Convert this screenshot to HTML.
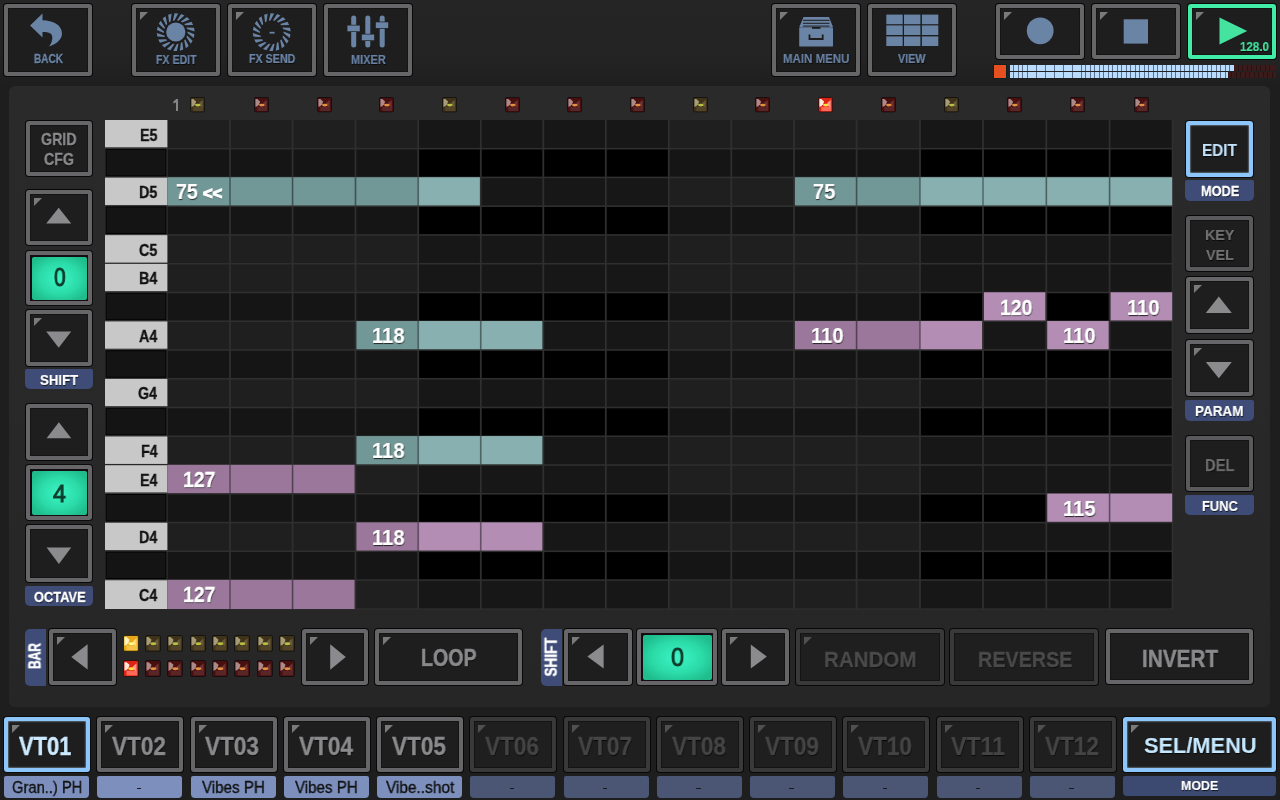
<!DOCTYPE html><html><head><meta charset="utf-8"><style>
*{margin:0;padding:0}
html,body{width:1280px;height:800px;overflow:hidden;background:#1e1e1e}
body{position:relative;font-family:"Liberation Sans",sans-serif}
.tx{position:absolute;white-space:nowrap;line-height:normal;transform-origin:0 0;will-change:transform}
.b{position:absolute;box-sizing:border-box;border:4px solid #666669;border-radius:3px;background:#1f1e1f;box-shadow:0 0 0 1px #080808, inset 0 0 0 1px #141414}
.b.mid{border-color:#5a5a5c}
.b.dim{border-color:#39393a;background:#1f1f1f}
.b.dim .cn{border-top-color:#505051}
.b.blue{border-color:#8cc6fa;box-shadow:0 0 0 1px #0c0c0c, inset 0 0 2px #bfe2ff}
.b.grn{border-color:#40eca6}
.cn{position:absolute;left:4px;top:4px;width:0;height:0;border-top:8px solid #7a7a7b;border-right:8px solid transparent}
.g{position:absolute;box-sizing:border-box;border:4px solid #666669;border-radius:3px;background:#140c10;box-shadow:0 0 0 1px #0c0c0c}
.g i{position:absolute;left:1.5px;top:1.5px;right:1.5px;bottom:1.5px;border-radius:2px;background:radial-gradient(ellipse 60% 60% at 50% 50%,#3cf5c6 0%,#2bdba8 60%,#1fbc8c 100%)}
.led{position:absolute;box-sizing:border-box;border-radius:2px}
.led.yd{background:#4d3f22;box-shadow:0 0 0 1px #1a140a}
.led.rd{background:#4a1818;box-shadow:0 0 0 1px #1a0a0a}
.led.rb{background:#e8281c;box-shadow:0 0 1px 1px #501010}
.led.yb{background:#f0b428;box-shadow:0 0 1px 1px #504010}
.lb{position:absolute;background:#3e4c77;border-radius:2px 2px 5px 5px}
.tl{position:absolute;background:#7d90bd;border-radius:2px 2px 4px 4px}
.tl.dim{background:#4b5675}
.tl.nav{background:#3c4a72}
</style></head><body><div style="position:absolute;left:0px;top:0px;width:1280px;height:90px;background:linear-gradient(180deg,#252525 0%,#232323 70%,#1d1d1d 100%)"></div>
<div style="position:absolute;left:9px;top:86px;width:1261px;height:620.5px;background:linear-gradient(180deg,#2a2a2a 0%,#282828 60%,#262626 100%);border-radius:6px"></div>
<svg style="position:absolute;left:0;top:0" width="1280" height="800" viewBox="0 0 1280 800"><rect x="167.6" y="120.0" width="1005.70" height="489.60" fill="#2f2f2f"/><rect x="167.40" y="120.00" width="61.70" height="27.86" fill="#1f1f1f"/><rect x="230.90" y="120.00" width="60.80" height="27.86" fill="#1f1f1f"/><rect x="293.50" y="120.00" width="61.10" height="27.86" fill="#1f1f1f"/><rect x="356.40" y="120.00" width="60.90" height="27.86" fill="#1f1f1f"/><rect x="419.10" y="120.00" width="60.80" height="27.86" fill="#171717"/><rect x="481.70" y="120.00" width="60.70" height="27.86" fill="#171717"/><rect x="544.20" y="120.00" width="60.70" height="27.86" fill="#171717"/><rect x="606.70" y="120.00" width="61.20" height="27.86" fill="#171717"/><rect x="669.70" y="120.00" width="60.70" height="27.86" fill="#1f1f1f"/><rect x="732.20" y="120.00" width="60.90" height="27.86" fill="#1f1f1f"/><rect x="794.90" y="120.00" width="60.80" height="27.86" fill="#1f1f1f"/><rect x="857.50" y="120.00" width="61.60" height="27.86" fill="#1f1f1f"/><rect x="920.90" y="120.00" width="61.20" height="27.86" fill="#171717"/><rect x="983.90" y="120.00" width="61.50" height="27.86" fill="#171717"/><rect x="1047.20" y="120.00" width="61.50" height="27.86" fill="#171717"/><rect x="1110.50" y="120.00" width="61.20" height="27.86" fill="#171717"/><rect x="167.40" y="149.46" width="61.70" height="27.16" fill="#151515"/><rect x="230.90" y="149.46" width="60.80" height="27.16" fill="#151515"/><rect x="293.50" y="149.46" width="61.10" height="27.16" fill="#151515"/><rect x="356.40" y="149.46" width="60.90" height="27.16" fill="#151515"/><rect x="419.10" y="149.46" width="60.80" height="27.16" fill="#000000"/><rect x="481.70" y="149.46" width="60.70" height="27.16" fill="#000000"/><rect x="544.20" y="149.46" width="60.70" height="27.16" fill="#000000"/><rect x="606.70" y="149.46" width="61.20" height="27.16" fill="#000000"/><rect x="669.70" y="149.46" width="60.70" height="27.16" fill="#151515"/><rect x="732.20" y="149.46" width="60.90" height="27.16" fill="#151515"/><rect x="794.90" y="149.46" width="60.80" height="27.16" fill="#151515"/><rect x="857.50" y="149.46" width="61.60" height="27.16" fill="#151515"/><rect x="920.90" y="149.46" width="61.20" height="27.16" fill="#000000"/><rect x="983.90" y="149.46" width="61.50" height="27.16" fill="#000000"/><rect x="1047.20" y="149.46" width="61.50" height="27.16" fill="#000000"/><rect x="1110.50" y="149.46" width="61.20" height="27.16" fill="#000000"/><rect x="167.40" y="178.22" width="61.70" height="27.16" fill="#1f1f1f"/><rect x="230.90" y="178.22" width="60.80" height="27.16" fill="#1f1f1f"/><rect x="293.50" y="178.22" width="61.10" height="27.16" fill="#1f1f1f"/><rect x="356.40" y="178.22" width="60.90" height="27.16" fill="#1f1f1f"/><rect x="419.10" y="178.22" width="60.80" height="27.16" fill="#171717"/><rect x="481.70" y="178.22" width="60.70" height="27.16" fill="#171717"/><rect x="544.20" y="178.22" width="60.70" height="27.16" fill="#171717"/><rect x="606.70" y="178.22" width="61.20" height="27.16" fill="#171717"/><rect x="669.70" y="178.22" width="60.70" height="27.16" fill="#1f1f1f"/><rect x="732.20" y="178.22" width="60.90" height="27.16" fill="#1f1f1f"/><rect x="794.90" y="178.22" width="60.80" height="27.16" fill="#1f1f1f"/><rect x="857.50" y="178.22" width="61.60" height="27.16" fill="#1f1f1f"/><rect x="920.90" y="178.22" width="61.20" height="27.16" fill="#171717"/><rect x="983.90" y="178.22" width="61.50" height="27.16" fill="#171717"/><rect x="1047.20" y="178.22" width="61.50" height="27.16" fill="#171717"/><rect x="1110.50" y="178.22" width="61.20" height="27.16" fill="#171717"/><rect x="167.40" y="206.98" width="61.70" height="27.16" fill="#151515"/><rect x="230.90" y="206.98" width="60.80" height="27.16" fill="#151515"/><rect x="293.50" y="206.98" width="61.10" height="27.16" fill="#151515"/><rect x="356.40" y="206.98" width="60.90" height="27.16" fill="#151515"/><rect x="419.10" y="206.98" width="60.80" height="27.16" fill="#000000"/><rect x="481.70" y="206.98" width="60.70" height="27.16" fill="#000000"/><rect x="544.20" y="206.98" width="60.70" height="27.16" fill="#000000"/><rect x="606.70" y="206.98" width="61.20" height="27.16" fill="#000000"/><rect x="669.70" y="206.98" width="60.70" height="27.16" fill="#151515"/><rect x="732.20" y="206.98" width="60.90" height="27.16" fill="#151515"/><rect x="794.90" y="206.98" width="60.80" height="27.16" fill="#151515"/><rect x="857.50" y="206.98" width="61.60" height="27.16" fill="#151515"/><rect x="920.90" y="206.98" width="61.20" height="27.16" fill="#000000"/><rect x="983.90" y="206.98" width="61.50" height="27.16" fill="#000000"/><rect x="1047.20" y="206.98" width="61.50" height="27.16" fill="#000000"/><rect x="1110.50" y="206.98" width="61.20" height="27.16" fill="#000000"/><rect x="167.40" y="235.74" width="61.70" height="27.16" fill="#1f1f1f"/><rect x="230.90" y="235.74" width="60.80" height="27.16" fill="#1f1f1f"/><rect x="293.50" y="235.74" width="61.10" height="27.16" fill="#1f1f1f"/><rect x="356.40" y="235.74" width="60.90" height="27.16" fill="#1f1f1f"/><rect x="419.10" y="235.74" width="60.80" height="27.16" fill="#171717"/><rect x="481.70" y="235.74" width="60.70" height="27.16" fill="#171717"/><rect x="544.20" y="235.74" width="60.70" height="27.16" fill="#171717"/><rect x="606.70" y="235.74" width="61.20" height="27.16" fill="#171717"/><rect x="669.70" y="235.74" width="60.70" height="27.16" fill="#1f1f1f"/><rect x="732.20" y="235.74" width="60.90" height="27.16" fill="#1f1f1f"/><rect x="794.90" y="235.74" width="60.80" height="27.16" fill="#1f1f1f"/><rect x="857.50" y="235.74" width="61.60" height="27.16" fill="#1f1f1f"/><rect x="920.90" y="235.74" width="61.20" height="27.16" fill="#171717"/><rect x="983.90" y="235.74" width="61.50" height="27.16" fill="#171717"/><rect x="1047.20" y="235.74" width="61.50" height="27.16" fill="#171717"/><rect x="1110.50" y="235.74" width="61.20" height="27.16" fill="#171717"/><rect x="167.40" y="264.50" width="61.70" height="27.16" fill="#1f1f1f"/><rect x="230.90" y="264.50" width="60.80" height="27.16" fill="#1f1f1f"/><rect x="293.50" y="264.50" width="61.10" height="27.16" fill="#1f1f1f"/><rect x="356.40" y="264.50" width="60.90" height="27.16" fill="#1f1f1f"/><rect x="419.10" y="264.50" width="60.80" height="27.16" fill="#171717"/><rect x="481.70" y="264.50" width="60.70" height="27.16" fill="#171717"/><rect x="544.20" y="264.50" width="60.70" height="27.16" fill="#171717"/><rect x="606.70" y="264.50" width="61.20" height="27.16" fill="#171717"/><rect x="669.70" y="264.50" width="60.70" height="27.16" fill="#1f1f1f"/><rect x="732.20" y="264.50" width="60.90" height="27.16" fill="#1f1f1f"/><rect x="794.90" y="264.50" width="60.80" height="27.16" fill="#1f1f1f"/><rect x="857.50" y="264.50" width="61.60" height="27.16" fill="#1f1f1f"/><rect x="920.90" y="264.50" width="61.20" height="27.16" fill="#171717"/><rect x="983.90" y="264.50" width="61.50" height="27.16" fill="#171717"/><rect x="1047.20" y="264.50" width="61.50" height="27.16" fill="#171717"/><rect x="1110.50" y="264.50" width="61.20" height="27.16" fill="#171717"/><rect x="167.40" y="293.26" width="61.70" height="27.16" fill="#151515"/><rect x="230.90" y="293.26" width="60.80" height="27.16" fill="#151515"/><rect x="293.50" y="293.26" width="61.10" height="27.16" fill="#151515"/><rect x="356.40" y="293.26" width="60.90" height="27.16" fill="#151515"/><rect x="419.10" y="293.26" width="60.80" height="27.16" fill="#000000"/><rect x="481.70" y="293.26" width="60.70" height="27.16" fill="#000000"/><rect x="544.20" y="293.26" width="60.70" height="27.16" fill="#000000"/><rect x="606.70" y="293.26" width="61.20" height="27.16" fill="#000000"/><rect x="669.70" y="293.26" width="60.70" height="27.16" fill="#151515"/><rect x="732.20" y="293.26" width="60.90" height="27.16" fill="#151515"/><rect x="794.90" y="293.26" width="60.80" height="27.16" fill="#151515"/><rect x="857.50" y="293.26" width="61.60" height="27.16" fill="#151515"/><rect x="920.90" y="293.26" width="61.20" height="27.16" fill="#000000"/><rect x="983.90" y="293.26" width="61.50" height="27.16" fill="#000000"/><rect x="1047.20" y="293.26" width="61.50" height="27.16" fill="#000000"/><rect x="1110.50" y="293.26" width="61.20" height="27.16" fill="#000000"/><rect x="167.40" y="322.02" width="61.70" height="27.16" fill="#1f1f1f"/><rect x="230.90" y="322.02" width="60.80" height="27.16" fill="#1f1f1f"/><rect x="293.50" y="322.02" width="61.10" height="27.16" fill="#1f1f1f"/><rect x="356.40" y="322.02" width="60.90" height="27.16" fill="#1f1f1f"/><rect x="419.10" y="322.02" width="60.80" height="27.16" fill="#171717"/><rect x="481.70" y="322.02" width="60.70" height="27.16" fill="#171717"/><rect x="544.20" y="322.02" width="60.70" height="27.16" fill="#171717"/><rect x="606.70" y="322.02" width="61.20" height="27.16" fill="#171717"/><rect x="669.70" y="322.02" width="60.70" height="27.16" fill="#1f1f1f"/><rect x="732.20" y="322.02" width="60.90" height="27.16" fill="#1f1f1f"/><rect x="794.90" y="322.02" width="60.80" height="27.16" fill="#1f1f1f"/><rect x="857.50" y="322.02" width="61.60" height="27.16" fill="#1f1f1f"/><rect x="920.90" y="322.02" width="61.20" height="27.16" fill="#171717"/><rect x="983.90" y="322.02" width="61.50" height="27.16" fill="#171717"/><rect x="1047.20" y="322.02" width="61.50" height="27.16" fill="#171717"/><rect x="1110.50" y="322.02" width="61.20" height="27.16" fill="#171717"/><rect x="167.40" y="350.78" width="61.70" height="27.16" fill="#151515"/><rect x="230.90" y="350.78" width="60.80" height="27.16" fill="#151515"/><rect x="293.50" y="350.78" width="61.10" height="27.16" fill="#151515"/><rect x="356.40" y="350.78" width="60.90" height="27.16" fill="#151515"/><rect x="419.10" y="350.78" width="60.80" height="27.16" fill="#000000"/><rect x="481.70" y="350.78" width="60.70" height="27.16" fill="#000000"/><rect x="544.20" y="350.78" width="60.70" height="27.16" fill="#000000"/><rect x="606.70" y="350.78" width="61.20" height="27.16" fill="#000000"/><rect x="669.70" y="350.78" width="60.70" height="27.16" fill="#151515"/><rect x="732.20" y="350.78" width="60.90" height="27.16" fill="#151515"/><rect x="794.90" y="350.78" width="60.80" height="27.16" fill="#151515"/><rect x="857.50" y="350.78" width="61.60" height="27.16" fill="#151515"/><rect x="920.90" y="350.78" width="61.20" height="27.16" fill="#000000"/><rect x="983.90" y="350.78" width="61.50" height="27.16" fill="#000000"/><rect x="1047.20" y="350.78" width="61.50" height="27.16" fill="#000000"/><rect x="1110.50" y="350.78" width="61.20" height="27.16" fill="#000000"/><rect x="167.40" y="379.54" width="61.70" height="27.16" fill="#1f1f1f"/><rect x="230.90" y="379.54" width="60.80" height="27.16" fill="#1f1f1f"/><rect x="293.50" y="379.54" width="61.10" height="27.16" fill="#1f1f1f"/><rect x="356.40" y="379.54" width="60.90" height="27.16" fill="#1f1f1f"/><rect x="419.10" y="379.54" width="60.80" height="27.16" fill="#171717"/><rect x="481.70" y="379.54" width="60.70" height="27.16" fill="#171717"/><rect x="544.20" y="379.54" width="60.70" height="27.16" fill="#171717"/><rect x="606.70" y="379.54" width="61.20" height="27.16" fill="#171717"/><rect x="669.70" y="379.54" width="60.70" height="27.16" fill="#1f1f1f"/><rect x="732.20" y="379.54" width="60.90" height="27.16" fill="#1f1f1f"/><rect x="794.90" y="379.54" width="60.80" height="27.16" fill="#1f1f1f"/><rect x="857.50" y="379.54" width="61.60" height="27.16" fill="#1f1f1f"/><rect x="920.90" y="379.54" width="61.20" height="27.16" fill="#171717"/><rect x="983.90" y="379.54" width="61.50" height="27.16" fill="#171717"/><rect x="1047.20" y="379.54" width="61.50" height="27.16" fill="#171717"/><rect x="1110.50" y="379.54" width="61.20" height="27.16" fill="#171717"/><rect x="167.40" y="408.30" width="61.70" height="27.16" fill="#151515"/><rect x="230.90" y="408.30" width="60.80" height="27.16" fill="#151515"/><rect x="293.50" y="408.30" width="61.10" height="27.16" fill="#151515"/><rect x="356.40" y="408.30" width="60.90" height="27.16" fill="#151515"/><rect x="419.10" y="408.30" width="60.80" height="27.16" fill="#000000"/><rect x="481.70" y="408.30" width="60.70" height="27.16" fill="#000000"/><rect x="544.20" y="408.30" width="60.70" height="27.16" fill="#000000"/><rect x="606.70" y="408.30" width="61.20" height="27.16" fill="#000000"/><rect x="669.70" y="408.30" width="60.70" height="27.16" fill="#151515"/><rect x="732.20" y="408.30" width="60.90" height="27.16" fill="#151515"/><rect x="794.90" y="408.30" width="60.80" height="27.16" fill="#151515"/><rect x="857.50" y="408.30" width="61.60" height="27.16" fill="#151515"/><rect x="920.90" y="408.30" width="61.20" height="27.16" fill="#000000"/><rect x="983.90" y="408.30" width="61.50" height="27.16" fill="#000000"/><rect x="1047.20" y="408.30" width="61.50" height="27.16" fill="#000000"/><rect x="1110.50" y="408.30" width="61.20" height="27.16" fill="#000000"/><rect x="167.40" y="437.06" width="61.70" height="27.16" fill="#1f1f1f"/><rect x="230.90" y="437.06" width="60.80" height="27.16" fill="#1f1f1f"/><rect x="293.50" y="437.06" width="61.10" height="27.16" fill="#1f1f1f"/><rect x="356.40" y="437.06" width="60.90" height="27.16" fill="#1f1f1f"/><rect x="419.10" y="437.06" width="60.80" height="27.16" fill="#171717"/><rect x="481.70" y="437.06" width="60.70" height="27.16" fill="#171717"/><rect x="544.20" y="437.06" width="60.70" height="27.16" fill="#171717"/><rect x="606.70" y="437.06" width="61.20" height="27.16" fill="#171717"/><rect x="669.70" y="437.06" width="60.70" height="27.16" fill="#1f1f1f"/><rect x="732.20" y="437.06" width="60.90" height="27.16" fill="#1f1f1f"/><rect x="794.90" y="437.06" width="60.80" height="27.16" fill="#1f1f1f"/><rect x="857.50" y="437.06" width="61.60" height="27.16" fill="#1f1f1f"/><rect x="920.90" y="437.06" width="61.20" height="27.16" fill="#171717"/><rect x="983.90" y="437.06" width="61.50" height="27.16" fill="#171717"/><rect x="1047.20" y="437.06" width="61.50" height="27.16" fill="#171717"/><rect x="1110.50" y="437.06" width="61.20" height="27.16" fill="#171717"/><rect x="167.40" y="465.82" width="61.70" height="27.16" fill="#1f1f1f"/><rect x="230.90" y="465.82" width="60.80" height="27.16" fill="#1f1f1f"/><rect x="293.50" y="465.82" width="61.10" height="27.16" fill="#1f1f1f"/><rect x="356.40" y="465.82" width="60.90" height="27.16" fill="#1f1f1f"/><rect x="419.10" y="465.82" width="60.80" height="27.16" fill="#171717"/><rect x="481.70" y="465.82" width="60.70" height="27.16" fill="#171717"/><rect x="544.20" y="465.82" width="60.70" height="27.16" fill="#171717"/><rect x="606.70" y="465.82" width="61.20" height="27.16" fill="#171717"/><rect x="669.70" y="465.82" width="60.70" height="27.16" fill="#1f1f1f"/><rect x="732.20" y="465.82" width="60.90" height="27.16" fill="#1f1f1f"/><rect x="794.90" y="465.82" width="60.80" height="27.16" fill="#1f1f1f"/><rect x="857.50" y="465.82" width="61.60" height="27.16" fill="#1f1f1f"/><rect x="920.90" y="465.82" width="61.20" height="27.16" fill="#171717"/><rect x="983.90" y="465.82" width="61.50" height="27.16" fill="#171717"/><rect x="1047.20" y="465.82" width="61.50" height="27.16" fill="#171717"/><rect x="1110.50" y="465.82" width="61.20" height="27.16" fill="#171717"/><rect x="167.40" y="494.58" width="61.70" height="27.16" fill="#151515"/><rect x="230.90" y="494.58" width="60.80" height="27.16" fill="#151515"/><rect x="293.50" y="494.58" width="61.10" height="27.16" fill="#151515"/><rect x="356.40" y="494.58" width="60.90" height="27.16" fill="#151515"/><rect x="419.10" y="494.58" width="60.80" height="27.16" fill="#000000"/><rect x="481.70" y="494.58" width="60.70" height="27.16" fill="#000000"/><rect x="544.20" y="494.58" width="60.70" height="27.16" fill="#000000"/><rect x="606.70" y="494.58" width="61.20" height="27.16" fill="#000000"/><rect x="669.70" y="494.58" width="60.70" height="27.16" fill="#151515"/><rect x="732.20" y="494.58" width="60.90" height="27.16" fill="#151515"/><rect x="794.90" y="494.58" width="60.80" height="27.16" fill="#151515"/><rect x="857.50" y="494.58" width="61.60" height="27.16" fill="#151515"/><rect x="920.90" y="494.58" width="61.20" height="27.16" fill="#000000"/><rect x="983.90" y="494.58" width="61.50" height="27.16" fill="#000000"/><rect x="1047.20" y="494.58" width="61.50" height="27.16" fill="#000000"/><rect x="1110.50" y="494.58" width="61.20" height="27.16" fill="#000000"/><rect x="167.40" y="523.34" width="61.70" height="27.16" fill="#1f1f1f"/><rect x="230.90" y="523.34" width="60.80" height="27.16" fill="#1f1f1f"/><rect x="293.50" y="523.34" width="61.10" height="27.16" fill="#1f1f1f"/><rect x="356.40" y="523.34" width="60.90" height="27.16" fill="#1f1f1f"/><rect x="419.10" y="523.34" width="60.80" height="27.16" fill="#171717"/><rect x="481.70" y="523.34" width="60.70" height="27.16" fill="#171717"/><rect x="544.20" y="523.34" width="60.70" height="27.16" fill="#171717"/><rect x="606.70" y="523.34" width="61.20" height="27.16" fill="#171717"/><rect x="669.70" y="523.34" width="60.70" height="27.16" fill="#1f1f1f"/><rect x="732.20" y="523.34" width="60.90" height="27.16" fill="#1f1f1f"/><rect x="794.90" y="523.34" width="60.80" height="27.16" fill="#1f1f1f"/><rect x="857.50" y="523.34" width="61.60" height="27.16" fill="#1f1f1f"/><rect x="920.90" y="523.34" width="61.20" height="27.16" fill="#171717"/><rect x="983.90" y="523.34" width="61.50" height="27.16" fill="#171717"/><rect x="1047.20" y="523.34" width="61.50" height="27.16" fill="#171717"/><rect x="1110.50" y="523.34" width="61.20" height="27.16" fill="#171717"/><rect x="167.40" y="552.10" width="61.70" height="27.16" fill="#151515"/><rect x="230.90" y="552.10" width="60.80" height="27.16" fill="#151515"/><rect x="293.50" y="552.10" width="61.10" height="27.16" fill="#151515"/><rect x="356.40" y="552.10" width="60.90" height="27.16" fill="#151515"/><rect x="419.10" y="552.10" width="60.80" height="27.16" fill="#000000"/><rect x="481.70" y="552.10" width="60.70" height="27.16" fill="#000000"/><rect x="544.20" y="552.10" width="60.70" height="27.16" fill="#000000"/><rect x="606.70" y="552.10" width="61.20" height="27.16" fill="#000000"/><rect x="669.70" y="552.10" width="60.70" height="27.16" fill="#151515"/><rect x="732.20" y="552.10" width="60.90" height="27.16" fill="#151515"/><rect x="794.90" y="552.10" width="60.80" height="27.16" fill="#151515"/><rect x="857.50" y="552.10" width="61.60" height="27.16" fill="#151515"/><rect x="920.90" y="552.10" width="61.20" height="27.16" fill="#000000"/><rect x="983.90" y="552.10" width="61.50" height="27.16" fill="#000000"/><rect x="1047.20" y="552.10" width="61.50" height="27.16" fill="#000000"/><rect x="1110.50" y="552.10" width="61.20" height="27.16" fill="#000000"/><rect x="167.40" y="580.86" width="61.70" height="27.54" fill="#1f1f1f"/><rect x="230.90" y="580.86" width="60.80" height="27.54" fill="#1f1f1f"/><rect x="293.50" y="580.86" width="61.10" height="27.54" fill="#1f1f1f"/><rect x="356.40" y="580.86" width="60.90" height="27.54" fill="#1f1f1f"/><rect x="419.10" y="580.86" width="60.80" height="27.54" fill="#171717"/><rect x="481.70" y="580.86" width="60.70" height="27.54" fill="#171717"/><rect x="544.20" y="580.86" width="60.70" height="27.54" fill="#171717"/><rect x="606.70" y="580.86" width="61.20" height="27.54" fill="#171717"/><rect x="669.70" y="580.86" width="60.70" height="27.54" fill="#1f1f1f"/><rect x="732.20" y="580.86" width="60.90" height="27.54" fill="#1f1f1f"/><rect x="794.90" y="580.86" width="60.80" height="27.54" fill="#1f1f1f"/><rect x="857.50" y="580.86" width="61.60" height="27.54" fill="#1f1f1f"/><rect x="920.90" y="580.86" width="61.20" height="27.54" fill="#171717"/><rect x="983.90" y="580.86" width="61.50" height="27.54" fill="#171717"/><rect x="1047.20" y="580.86" width="61.50" height="27.54" fill="#171717"/><rect x="1110.50" y="580.86" width="61.20" height="27.54" fill="#171717"/><rect x="105" y="120.00" width="62.4" height="27.56" fill="#c8c8c8"/><rect x="105" y="147.46" width="62.4" height="29.96" fill="#3a3a3a"/><rect x="106" y="149.36" width="60" height="26.56" fill="#141414" stroke="#000" stroke-width="1"/><rect x="105" y="177.62" width="62.4" height="27.46" fill="#c8c8c8"/><rect x="105" y="204.98" width="62.4" height="29.96" fill="#3a3a3a"/><rect x="106" y="206.88" width="60" height="26.56" fill="#141414" stroke="#000" stroke-width="1"/><rect x="105" y="235.14" width="62.4" height="27.46" fill="#c8c8c8"/><rect x="105" y="263.90" width="62.4" height="27.46" fill="#c8c8c8"/><rect x="105" y="291.26" width="62.4" height="29.96" fill="#3a3a3a"/><rect x="106" y="293.16" width="60" height="26.56" fill="#141414" stroke="#000" stroke-width="1"/><rect x="105" y="321.42" width="62.4" height="27.46" fill="#c8c8c8"/><rect x="105" y="348.78" width="62.4" height="29.96" fill="#3a3a3a"/><rect x="106" y="350.68" width="60" height="26.56" fill="#141414" stroke="#000" stroke-width="1"/><rect x="105" y="378.94" width="62.4" height="27.46" fill="#c8c8c8"/><rect x="105" y="406.30" width="62.4" height="29.96" fill="#3a3a3a"/><rect x="106" y="408.20" width="60" height="26.56" fill="#141414" stroke="#000" stroke-width="1"/><rect x="105" y="436.46" width="62.4" height="27.46" fill="#c8c8c8"/><rect x="105" y="465.22" width="62.4" height="27.46" fill="#c8c8c8"/><rect x="105" y="492.58" width="62.4" height="29.96" fill="#3a3a3a"/><rect x="106" y="494.48" width="60" height="26.56" fill="#141414" stroke="#000" stroke-width="1"/><rect x="105" y="522.74" width="62.4" height="27.46" fill="#c8c8c8"/><rect x="105" y="550.10" width="62.4" height="29.96" fill="#3a3a3a"/><rect x="106" y="552.00" width="60" height="26.56" fill="#141414" stroke="#000" stroke-width="1"/><rect x="105" y="580.26" width="62.4" height="28.74" fill="#c8c8c8"/><rect x="167.40" y="177.22" width="62.60" height="28.26" fill="#729797"/><rect x="230.00" y="177.22" width="62.60" height="28.26" fill="#729797"/><rect x="229.10" y="177.22" width="1.8" height="28.26" fill="#000" fill-opacity="0.35"/><rect x="292.60" y="177.22" width="62.90" height="28.26" fill="#729797"/><rect x="291.70" y="177.22" width="1.8" height="28.26" fill="#000" fill-opacity="0.35"/><rect x="355.50" y="177.22" width="62.70" height="28.26" fill="#729797"/><rect x="354.60" y="177.22" width="1.8" height="28.26" fill="#000" fill-opacity="0.35"/><rect x="418.20" y="177.22" width="61.70" height="28.26" fill="#89b0b0"/><rect x="417.30" y="177.22" width="1.8" height="28.26" fill="#000" fill-opacity="0.35"/><rect x="794.90" y="177.22" width="61.70" height="28.26" fill="#729797"/><rect x="856.60" y="177.22" width="63.40" height="28.26" fill="#729797"/><rect x="855.70" y="177.22" width="1.8" height="28.26" fill="#000" fill-opacity="0.35"/><rect x="920.00" y="177.22" width="63.00" height="28.26" fill="#89b0b0"/><rect x="919.10" y="177.22" width="1.8" height="28.26" fill="#000" fill-opacity="0.35"/><rect x="983.00" y="177.22" width="63.30" height="28.26" fill="#89b0b0"/><rect x="982.10" y="177.22" width="1.8" height="28.26" fill="#000" fill-opacity="0.35"/><rect x="1046.30" y="177.22" width="63.30" height="28.26" fill="#89b0b0"/><rect x="1045.40" y="177.22" width="1.8" height="28.26" fill="#000" fill-opacity="0.35"/><rect x="1109.60" y="177.22" width="62.60" height="28.26" fill="#89b0b0"/><rect x="1108.70" y="177.22" width="1.8" height="28.26" fill="#000" fill-opacity="0.35"/><rect x="983.90" y="292.26" width="61.50" height="28.26" fill="#b38db4"/><rect x="1110.50" y="292.26" width="61.70" height="28.26" fill="#b38db4"/><rect x="356.40" y="321.02" width="61.80" height="28.26" fill="#729797"/><rect x="418.20" y="321.02" width="62.60" height="28.26" fill="#89b0b0"/><rect x="417.30" y="321.02" width="1.8" height="28.26" fill="#000" fill-opacity="0.35"/><rect x="480.80" y="321.02" width="61.60" height="28.26" fill="#89b0b0"/><rect x="479.90" y="321.02" width="1.8" height="28.26" fill="#000" fill-opacity="0.35"/><rect x="794.90" y="321.02" width="61.70" height="28.26" fill="#9b789b"/><rect x="856.60" y="321.02" width="63.40" height="28.26" fill="#9b789b"/><rect x="855.70" y="321.02" width="1.8" height="28.26" fill="#000" fill-opacity="0.35"/><rect x="920.00" y="321.02" width="62.10" height="28.26" fill="#b38db4"/><rect x="919.10" y="321.02" width="1.8" height="28.26" fill="#000" fill-opacity="0.35"/><rect x="1047.20" y="321.02" width="61.50" height="28.26" fill="#b38db4"/><rect x="356.40" y="436.06" width="61.80" height="28.26" fill="#729797"/><rect x="418.20" y="436.06" width="62.60" height="28.26" fill="#89b0b0"/><rect x="417.30" y="436.06" width="1.8" height="28.26" fill="#000" fill-opacity="0.35"/><rect x="480.80" y="436.06" width="61.60" height="28.26" fill="#89b0b0"/><rect x="479.90" y="436.06" width="1.8" height="28.26" fill="#000" fill-opacity="0.35"/><rect x="167.40" y="464.82" width="62.60" height="28.26" fill="#9b789b"/><rect x="230.00" y="464.82" width="62.60" height="28.26" fill="#9b789b"/><rect x="229.10" y="464.82" width="1.8" height="28.26" fill="#000" fill-opacity="0.35"/><rect x="292.60" y="464.82" width="62.00" height="28.26" fill="#9b789b"/><rect x="291.70" y="464.82" width="1.8" height="28.26" fill="#000" fill-opacity="0.35"/><rect x="1047.20" y="493.58" width="62.40" height="28.26" fill="#b38db4"/><rect x="1109.60" y="493.58" width="62.60" height="28.26" fill="#b38db4"/><rect x="1108.70" y="493.58" width="1.8" height="28.26" fill="#000" fill-opacity="0.35"/><rect x="356.40" y="522.34" width="61.80" height="28.26" fill="#9b789b"/><rect x="418.20" y="522.34" width="62.60" height="28.26" fill="#b38db4"/><rect x="417.30" y="522.34" width="1.8" height="28.26" fill="#000" fill-opacity="0.35"/><rect x="480.80" y="522.34" width="61.60" height="28.26" fill="#b38db4"/><rect x="479.90" y="522.34" width="1.8" height="28.26" fill="#000" fill-opacity="0.35"/><rect x="167.40" y="579.86" width="62.60" height="29.14" fill="#9b789b"/><rect x="230.00" y="579.86" width="62.60" height="29.14" fill="#9b789b"/><rect x="229.10" y="579.86" width="1.8" height="29.14" fill="#000" fill-opacity="0.35"/><rect x="292.60" y="579.86" width="62.00" height="29.14" fill="#9b789b"/><rect x="291.70" y="579.86" width="1.8" height="29.14" fill="#000" fill-opacity="0.35"/></svg>
<div class="b" style="left:4px;top:4px;width:88px;height:72px"></div>
<div class="b" style="left:132px;top:4px;width:88px;height:72px"><i class="cn"></i></div>
<div class="b" style="left:228px;top:4px;width:88px;height:72px"><i class="cn"></i></div>
<div class="b" style="left:324px;top:4px;width:88px;height:72px"></div>
<div class="b" style="left:772px;top:4px;width:88px;height:72px"><i class="cn"></i></div>
<div class="b" style="left:868px;top:4px;width:88px;height:72px"></div>
<div class="b" style="left:996px;top:4px;width:88px;height:55px"><i class="cn"></i></div>
<div class="b" style="left:1092px;top:4px;width:88px;height:55px"><i class="cn"></i></div>
<div class="b grn" style="left:1188px;top:4px;width:88px;height:55px"><i class="cn"></i></div>
<div class="b" style="left:26px;top:121px;width:66px;height:55px"></div>
<div class="b" style="left:26px;top:190px;width:66px;height:55px"><i class="cn"></i></div>
<div class="g" style="left:26px;top:251px;width:66px;height:54px"><i></i></div>
<div class="b" style="left:26px;top:310px;width:66px;height:56px"><i class="cn"></i></div>
<div class="lb" style="left:25px;top:369px;width:68px;height:20px"></div>
<div class="b" style="left:26px;top:404px;width:66px;height:56px"></div>
<div class="g" style="left:26px;top:465px;width:66px;height:55px"><i></i></div>
<div class="b" style="left:26px;top:525px;width:66px;height:57px"></div>
<div class="lb" style="left:25px;top:586px;width:68px;height:20px"></div>
<div class="b blue" style="left:1186px;top:121px;width:67px;height:56px"></div>
<div class="lb" style="left:1185px;top:180px;width:69px;height:21px"></div>
<div class="b mid" style="left:1186px;top:216px;width:67px;height:55px"></div>
<div class="b" style="left:1186px;top:277px;width:67px;height:56px"><i class="cn"></i></div>
<div class="b" style="left:1186px;top:340px;width:67px;height:56px"><i class="cn"></i></div>
<div class="lb" style="left:1185px;top:400px;width:69px;height:21px"></div>
<div class="b mid" style="left:1186px;top:436px;width:67px;height:55px"></div>
<div class="lb" style="left:1185px;top:495px;width:69px;height:20px"></div>
<div class="lb" style="left:25px;top:629px;width:21px;height:57px;border-radius:5px 0 0 5px"></div>
<div class="b" style="left:49px;top:629px;width:67px;height:56px"><i class="cn"></i></div>
<div class="b" style="left:302px;top:629px;width:66px;height:56px"><i class="cn"></i></div>
<div class="b" style="left:375px;top:629px;width:147px;height:56px"><i class="cn"></i></div>
<div class="lb" style="left:541px;top:629px;width:21px;height:57px;border-radius:5px 0 0 5px"></div>
<div class="b" style="left:564px;top:629px;width:68px;height:56px"><i class="cn"></i></div>
<div class="g" style="left:637px;top:629px;width:80px;height:56px"><i></i></div>
<div class="b" style="left:722px;top:629px;width:67px;height:56px"><i class="cn"></i></div>
<div class="b dim" style="left:796px;top:629px;width:148px;height:56px"><i class="cn"></i></div>
<div class="b dim" style="left:950px;top:629px;width:148px;height:56px"></div>
<div class="b" style="left:1106px;top:629px;width:147px;height:55px"></div>
<div class="b blue" style="left:4px;top:717px;width:86px;height:55px"><i class="cn"></i></div>
<div class="tl" style="left:4px;top:776px;width:85px;height:22px"></div>
<div class="b" style="left:97px;top:717px;width:86px;height:55px"><i class="cn"></i></div>
<div class="tl" style="left:97px;top:776px;width:85px;height:22px"></div>
<div class="b" style="left:191px;top:717px;width:86px;height:55px"><i class="cn"></i></div>
<div class="tl" style="left:191px;top:776px;width:85px;height:22px"></div>
<div class="b" style="left:284px;top:717px;width:86px;height:55px"><i class="cn"></i></div>
<div class="tl" style="left:284px;top:776px;width:85px;height:22px"></div>
<div class="b" style="left:377px;top:717px;width:86px;height:55px"><i class="cn"></i></div>
<div class="tl" style="left:377px;top:776px;width:85px;height:22px"></div>
<div class="b dim" style="left:470px;top:717px;width:86px;height:55px"><i class="cn"></i></div>
<div class="tl dim" style="left:470px;top:776px;width:85px;height:22px"></div>
<div class="b dim" style="left:564px;top:717px;width:86px;height:55px"><i class="cn"></i></div>
<div class="tl dim" style="left:564px;top:776px;width:85px;height:22px"></div>
<div class="b dim" style="left:657px;top:717px;width:86px;height:55px"><i class="cn"></i></div>
<div class="tl dim" style="left:657px;top:776px;width:85px;height:22px"></div>
<div class="b dim" style="left:750px;top:717px;width:86px;height:55px"><i class="cn"></i></div>
<div class="tl dim" style="left:750px;top:776px;width:85px;height:22px"></div>
<div class="b dim" style="left:843px;top:717px;width:86px;height:55px"><i class="cn"></i></div>
<div class="tl dim" style="left:843px;top:776px;width:85px;height:22px"></div>
<div class="b dim" style="left:937px;top:717px;width:86px;height:55px"><i class="cn"></i></div>
<div class="tl dim" style="left:937px;top:776px;width:85px;height:22px"></div>
<div class="b dim" style="left:1030px;top:717px;width:86px;height:55px"><i class="cn"></i></div>
<div class="tl dim" style="left:1030px;top:776px;width:85px;height:22px"></div>
<div class="b blue" style="left:1123px;top:717px;width:153px;height:55px"><i class="cn"></i></div>
<div class="tl nav" style="left:1123px;top:776px;width:153px;height:20px"></div>
<svg style="position:absolute;left:0;top:0" width="1280" height="800" viewBox="0 0 1280 800"><path d="M30.1,25.6 L42.5,13.6 L42.5,20.2 C53,20.2 62,25 62,33.5 C62,39.5 56.5,44 48.9,46.6 C52.5,42.5 53.5,36 50.8,33.8 C48.5,32 45.5,32 42.5,32 L42.5,37.6 Z" fill="#6a84a6"/><polygon points="187.47,31.38 194.48,34.34 193.73,37.88 187.47,33.02" fill="#6a84a6"/><polygon points="187.04,35.45 192.61,40.63 190.69,43.71 186.48,37.00" fill="#6a84a6"/><polygon points="185.25,39.14 188.71,45.91 185.85,48.14 184.19,40.40" fill="#6a84a6"/><polygon points="182.30,41.98 183.24,49.53 179.79,50.65 180.87,42.81" fill="#6a84a6"/><polygon points="178.55,43.65 176.85,51.06 173.23,50.94 176.93,43.94" fill="#6a84a6"/><polygon points="174.47,43.94 170.33,50.32 166.97,48.96 172.85,43.65" fill="#6a84a6"/><polygon points="170.53,42.81 164.46,47.39 161.77,44.97 169.10,41.98" fill="#6a84a6"/><polygon points="167.21,40.40 159.94,42.63 158.24,39.43 166.15,39.14" fill="#6a84a6"/><polygon points="164.92,37.00 157.32,36.61 156.82,33.02 164.36,35.45" fill="#6a84a6"/><polygon points="163.93,33.02 156.92,30.06 157.67,26.52 163.93,31.38" fill="#6a84a6"/><polygon points="164.36,28.95 158.79,23.77 160.71,20.69 164.92,27.40" fill="#6a84a6"/><polygon points="166.15,25.26 162.69,18.49 165.55,16.26 167.21,24.00" fill="#6a84a6"/><polygon points="169.10,22.42 168.16,14.87 171.61,13.75 170.53,21.59" fill="#6a84a6"/><polygon points="172.85,20.75 174.55,13.34 178.17,13.46 174.47,20.46" fill="#6a84a6"/><polygon points="176.93,20.46 181.07,14.08 184.43,15.44 178.55,20.75" fill="#6a84a6"/><polygon points="180.87,21.59 186.94,17.01 189.63,19.43 182.30,22.42" fill="#6a84a6"/><polygon points="184.19,24.00 191.46,21.77 193.16,24.97 185.25,25.26" fill="#6a84a6"/><polygon points="186.48,27.40 194.08,27.79 194.58,31.38 187.04,28.95" fill="#6a84a6"/><circle cx="175.8" cy="32" r="9.6" fill="#6a84a6"/><polygon points="283.47,31.38 290.48,34.34 289.73,37.88 283.47,33.02" fill="#6a84a6"/><polygon points="283.04,35.45 288.61,40.63 286.69,43.71 282.48,37.00" fill="#6a84a6"/><polygon points="281.25,39.14 284.71,45.91 281.85,48.14 280.19,40.40" fill="#6a84a6"/><polygon points="278.30,41.98 279.24,49.53 275.79,50.65 276.87,42.81" fill="#6a84a6"/><polygon points="274.55,43.65 272.85,51.06 269.23,50.94 272.93,43.94" fill="#6a84a6"/><polygon points="270.47,43.94 266.33,50.32 262.97,48.96 268.85,43.65" fill="#6a84a6"/><polygon points="266.53,42.81 260.46,47.39 257.77,44.97 265.10,41.98" fill="#6a84a6"/><polygon points="263.21,40.40 255.94,42.63 254.24,39.43 262.15,39.14" fill="#6a84a6"/><polygon points="260.92,37.00 253.32,36.61 252.82,33.02 260.36,35.45" fill="#6a84a6"/><polygon points="259.93,33.02 252.92,30.06 253.67,26.52 259.93,31.38" fill="#6a84a6"/><polygon points="260.36,28.95 254.79,23.77 256.71,20.69 260.92,27.40" fill="#6a84a6"/><polygon points="262.15,25.26 258.69,18.49 261.55,16.26 263.21,24.00" fill="#6a84a6"/><polygon points="265.10,22.42 264.16,14.87 267.61,13.75 266.53,21.59" fill="#6a84a6"/><polygon points="268.85,20.75 270.55,13.34 274.17,13.46 270.47,20.46" fill="#6a84a6"/><polygon points="272.93,20.46 277.07,14.08 280.43,15.44 274.55,20.75" fill="#6a84a6"/><polygon points="276.87,21.59 282.94,17.01 285.63,19.43 278.30,22.42" fill="#6a84a6"/><polygon points="280.19,24.00 287.46,21.77 289.16,24.97 281.25,25.26" fill="#6a84a6"/><polygon points="282.48,27.40 290.08,27.79 290.58,31.38 283.04,28.95" fill="#6a84a6"/><rect x="269.6" y="31.8" width="5" height="1.8" fill="#6a84a6"/><rect x="351.20" y="15.5" width="5" height="32" rx="2.5" fill="#6a84a6"/><rect x="346.80" y="24.80" width="13.6" height="7.2" fill="#1e1d1e"/><rect x="347.40" y="25.50" width="12.4" height="5.8" fill="#6a84a6"/><rect x="365.30" y="15.5" width="5" height="32" rx="2.5" fill="#6a84a6"/><rect x="361.20" y="33.80" width="13.6" height="7.2" fill="#1e1d1e"/><rect x="361.80" y="34.50" width="12.4" height="5.8" fill="#6a84a6"/><rect x="379.70" y="15.5" width="5" height="32" rx="2.5" fill="#6a84a6"/><rect x="375.20" y="21.60" width="13.6" height="7.2" fill="#1e1d1e"/><rect x="375.80" y="22.30" width="12.4" height="5.8" fill="#6a84a6"/><path d="M803.5,17 L829,17 L833,27 L799.3,27 Z" fill="#6a84a6"/><rect x="803" y="19.8" width="26.5" height="1" fill="#1e1d1e"/><rect x="803" y="22.8" width="26.5" height="1" fill="#1e1d1e"/><rect x="803" y="25.6" width="26.5" height="1" fill="#1e1d1e"/><rect x="799.2" y="27.2" width="33.8" height="19.4" rx="1.2" fill="#6a84a6"/><rect x="812" y="27" width="8.5" height="1.8" fill="#1e1d1e"/><path d="M808.6,34.6 L810.4,34.6 L810.4,38 L821.8,38 L821.8,34.6 L823.6,34.6 L823.6,39.9 L808.6,39.9 Z" fill="#1e1d1e"/><rect x="886.3" y="14.6" width="16.4" height="9.6" fill="#6a84a6"/><rect x="904" y="14.6" width="16.4" height="9.6" fill="#6a84a6"/><rect x="921.9" y="14.6" width="16.4" height="9.6" fill="#6a84a6"/><rect x="886.3" y="25.4" width="16.4" height="9.6" fill="#6a84a6"/><rect x="904" y="25.4" width="16.4" height="9.6" fill="#6a84a6"/><rect x="921.9" y="25.4" width="16.4" height="9.6" fill="#6a84a6"/><rect x="886.3" y="36.4" width="16.4" height="9.6" fill="#6a84a6"/><rect x="904" y="36.4" width="16.4" height="9.6" fill="#6a84a6"/><rect x="921.9" y="36.4" width="16.4" height="9.6" fill="#6a84a6"/><circle cx="1040.2" cy="30.8" r="13.4" fill="#6a84a6"/><rect x="1123.7" y="19.3" width="24.3" height="24.3" fill="#6a84a6"/><polygon points="1219.5,17.6 1247.2,31 1219.5,44.5" fill="#45e3a0"/><polygon points="46.2,223.6 71.2,223.6 58.7,207.7" fill="#8b8b8d"/><polygon points="46.2,331.6 71.2,331.6 58.7,347.8" fill="#8b8b8d"/><polygon points="46.6,438.3 71.2,438.3 58.9,422.2" fill="#8b8b8d"/><polygon points="46.6,547.6 71.2,547.6 58.9,564" fill="#8b8b8d"/><polygon points="1205.8,312.9 1231.8,312.9 1218.8,296.6" fill="#8b8b8d"/><polygon points="1205.8,362 1231.8,362 1218.8,378.2" fill="#8b8b8d"/><polygon points="87.6,644.3 87.6,669.4 71.3,656.9" fill="#8b8b8d"/><polygon points="330.2,644.3 330.2,669.7 345.8,657" fill="#8b8b8d"/><polygon points="603.6,644.5 603.6,668.6 587.4,656.6" fill="#8b8b8d"/><polygon points="750.8,644.5 750.8,668.6 766.8,656.6" fill="#8b8b8d"/></svg>
<svg style="position:absolute;left:190.40px;top:97.00px" width="15.00" height="15.60" viewBox="0 0 16 16" preserveAspectRatio="none"><rect x="0.3" y="0.3" width="15.4" height="15.4" rx="1.5" fill="#120e08"/><rect x="1" y="1" width="14" height="14" rx="1" fill="#3e3219"/><polygon points="3.5,10 3.5,14.5 14,14.5 14,10" fill="#514429"/><polygon points="1.5,2 3.5,2 6.5,4.5 5.5,7.5 3.5,9.5 1.5,10" fill="#a89c78"/><polygon points="13.5,3 13.5,10.5 9.5,9 10,6" fill="#675a3e"/><ellipse cx="8.3" cy="8.3" rx="3" ry="1.4" fill="#b8c040"/></svg>
<svg style="position:absolute;left:253.90px;top:97.00px" width="15.00" height="15.60" viewBox="0 0 16 16" preserveAspectRatio="none"><rect x="0.3" y="0.3" width="15.4" height="15.4" rx="1.5" fill="#140606"/><rect x="1" y="1" width="14" height="14" rx="1" fill="#480f0f"/><polygon points="3.5,10 3.5,14.5 14,14.5 14,10" fill="#582626"/><polygon points="1.5,2 3.5,2 6.5,4.5 5.5,7.5 3.5,9.5 1.5,10" fill="#ac8a8a"/><polygon points="13.5,3 13.5,10.5 9.5,9 10,6" fill="#6c3434"/><ellipse cx="8.3" cy="8.3" rx="3" ry="1.4" fill="#e09040"/></svg>
<svg style="position:absolute;left:316.50px;top:97.00px" width="15.00" height="15.60" viewBox="0 0 16 16" preserveAspectRatio="none"><rect x="0.3" y="0.3" width="15.4" height="15.4" rx="1.5" fill="#140606"/><rect x="1" y="1" width="14" height="14" rx="1" fill="#480f0f"/><polygon points="3.5,10 3.5,14.5 14,14.5 14,10" fill="#582626"/><polygon points="1.5,2 3.5,2 6.5,4.5 5.5,7.5 3.5,9.5 1.5,10" fill="#ac8a8a"/><polygon points="13.5,3 13.5,10.5 9.5,9 10,6" fill="#6c3434"/><ellipse cx="8.3" cy="8.3" rx="3" ry="1.4" fill="#e09040"/></svg>
<svg style="position:absolute;left:379.40px;top:97.00px" width="15.00" height="15.60" viewBox="0 0 16 16" preserveAspectRatio="none"><rect x="0.3" y="0.3" width="15.4" height="15.4" rx="1.5" fill="#140606"/><rect x="1" y="1" width="14" height="14" rx="1" fill="#480f0f"/><polygon points="3.5,10 3.5,14.5 14,14.5 14,10" fill="#582626"/><polygon points="1.5,2 3.5,2 6.5,4.5 5.5,7.5 3.5,9.5 1.5,10" fill="#ac8a8a"/><polygon points="13.5,3 13.5,10.5 9.5,9 10,6" fill="#6c3434"/><ellipse cx="8.3" cy="8.3" rx="3" ry="1.4" fill="#e09040"/></svg>
<svg style="position:absolute;left:442.10px;top:97.00px" width="15.00" height="15.60" viewBox="0 0 16 16" preserveAspectRatio="none"><rect x="0.3" y="0.3" width="15.4" height="15.4" rx="1.5" fill="#120e08"/><rect x="1" y="1" width="14" height="14" rx="1" fill="#3e3219"/><polygon points="3.5,10 3.5,14.5 14,14.5 14,10" fill="#514429"/><polygon points="1.5,2 3.5,2 6.5,4.5 5.5,7.5 3.5,9.5 1.5,10" fill="#a89c78"/><polygon points="13.5,3 13.5,10.5 9.5,9 10,6" fill="#675a3e"/><ellipse cx="8.3" cy="8.3" rx="3" ry="1.4" fill="#b8c040"/></svg>
<svg style="position:absolute;left:504.70px;top:97.00px" width="15.00" height="15.60" viewBox="0 0 16 16" preserveAspectRatio="none"><rect x="0.3" y="0.3" width="15.4" height="15.4" rx="1.5" fill="#140606"/><rect x="1" y="1" width="14" height="14" rx="1" fill="#480f0f"/><polygon points="3.5,10 3.5,14.5 14,14.5 14,10" fill="#582626"/><polygon points="1.5,2 3.5,2 6.5,4.5 5.5,7.5 3.5,9.5 1.5,10" fill="#ac8a8a"/><polygon points="13.5,3 13.5,10.5 9.5,9 10,6" fill="#6c3434"/><ellipse cx="8.3" cy="8.3" rx="3" ry="1.4" fill="#e09040"/></svg>
<svg style="position:absolute;left:567.20px;top:97.00px" width="15.00" height="15.60" viewBox="0 0 16 16" preserveAspectRatio="none"><rect x="0.3" y="0.3" width="15.4" height="15.4" rx="1.5" fill="#140606"/><rect x="1" y="1" width="14" height="14" rx="1" fill="#480f0f"/><polygon points="3.5,10 3.5,14.5 14,14.5 14,10" fill="#582626"/><polygon points="1.5,2 3.5,2 6.5,4.5 5.5,7.5 3.5,9.5 1.5,10" fill="#ac8a8a"/><polygon points="13.5,3 13.5,10.5 9.5,9 10,6" fill="#6c3434"/><ellipse cx="8.3" cy="8.3" rx="3" ry="1.4" fill="#e09040"/></svg>
<svg style="position:absolute;left:629.70px;top:97.00px" width="15.00" height="15.60" viewBox="0 0 16 16" preserveAspectRatio="none"><rect x="0.3" y="0.3" width="15.4" height="15.4" rx="1.5" fill="#140606"/><rect x="1" y="1" width="14" height="14" rx="1" fill="#480f0f"/><polygon points="3.5,10 3.5,14.5 14,14.5 14,10" fill="#582626"/><polygon points="1.5,2 3.5,2 6.5,4.5 5.5,7.5 3.5,9.5 1.5,10" fill="#ac8a8a"/><polygon points="13.5,3 13.5,10.5 9.5,9 10,6" fill="#6c3434"/><ellipse cx="8.3" cy="8.3" rx="3" ry="1.4" fill="#e09040"/></svg>
<svg style="position:absolute;left:692.70px;top:97.00px" width="15.00" height="15.60" viewBox="0 0 16 16" preserveAspectRatio="none"><rect x="0.3" y="0.3" width="15.4" height="15.4" rx="1.5" fill="#120e08"/><rect x="1" y="1" width="14" height="14" rx="1" fill="#3e3219"/><polygon points="3.5,10 3.5,14.5 14,14.5 14,10" fill="#514429"/><polygon points="1.5,2 3.5,2 6.5,4.5 5.5,7.5 3.5,9.5 1.5,10" fill="#a89c78"/><polygon points="13.5,3 13.5,10.5 9.5,9 10,6" fill="#675a3e"/><ellipse cx="8.3" cy="8.3" rx="3" ry="1.4" fill="#b8c040"/></svg>
<svg style="position:absolute;left:755.20px;top:97.00px" width="15.00" height="15.60" viewBox="0 0 16 16" preserveAspectRatio="none"><rect x="0.3" y="0.3" width="15.4" height="15.4" rx="1.5" fill="#140606"/><rect x="1" y="1" width="14" height="14" rx="1" fill="#480f0f"/><polygon points="3.5,10 3.5,14.5 14,14.5 14,10" fill="#582626"/><polygon points="1.5,2 3.5,2 6.5,4.5 5.5,7.5 3.5,9.5 1.5,10" fill="#ac8a8a"/><polygon points="13.5,3 13.5,10.5 9.5,9 10,6" fill="#6c3434"/><ellipse cx="8.3" cy="8.3" rx="3" ry="1.4" fill="#e09040"/></svg>
<svg style="position:absolute;left:817.90px;top:97.00px" width="15.00" height="15.60" viewBox="0 0 16 16" preserveAspectRatio="none"><rect x="0.3" y="0.3" width="15.4" height="15.4" rx="1.5" fill="#3a0a08"/><rect x="1" y="1" width="14" height="14" rx="1" fill="#dc2414"/><polygon points="3.5,10 3.5,14.5 14,14.5 14,10" fill="#ff6a58"/><polygon points="1.5,2 3.5,2 6.5,4.5 5.5,7.5 3.5,9.5 1.5,10" fill="#ffe8dc"/><polygon points="13.5,3 13.5,10.5 9.5,9 10,6" fill="#ff9a8a"/><ellipse cx="8.3" cy="8.3" rx="3" ry="1.4" fill="#ffe040"/></svg>
<svg style="position:absolute;left:880.50px;top:97.00px" width="15.00" height="15.60" viewBox="0 0 16 16" preserveAspectRatio="none"><rect x="0.3" y="0.3" width="15.4" height="15.4" rx="1.5" fill="#140606"/><rect x="1" y="1" width="14" height="14" rx="1" fill="#480f0f"/><polygon points="3.5,10 3.5,14.5 14,14.5 14,10" fill="#582626"/><polygon points="1.5,2 3.5,2 6.5,4.5 5.5,7.5 3.5,9.5 1.5,10" fill="#ac8a8a"/><polygon points="13.5,3 13.5,10.5 9.5,9 10,6" fill="#6c3434"/><ellipse cx="8.3" cy="8.3" rx="3" ry="1.4" fill="#e09040"/></svg>
<svg style="position:absolute;left:943.90px;top:97.00px" width="15.00" height="15.60" viewBox="0 0 16 16" preserveAspectRatio="none"><rect x="0.3" y="0.3" width="15.4" height="15.4" rx="1.5" fill="#120e08"/><rect x="1" y="1" width="14" height="14" rx="1" fill="#3e3219"/><polygon points="3.5,10 3.5,14.5 14,14.5 14,10" fill="#514429"/><polygon points="1.5,2 3.5,2 6.5,4.5 5.5,7.5 3.5,9.5 1.5,10" fill="#a89c78"/><polygon points="13.5,3 13.5,10.5 9.5,9 10,6" fill="#675a3e"/><ellipse cx="8.3" cy="8.3" rx="3" ry="1.4" fill="#b8c040"/></svg>
<svg style="position:absolute;left:1006.90px;top:97.00px" width="15.00" height="15.60" viewBox="0 0 16 16" preserveAspectRatio="none"><rect x="0.3" y="0.3" width="15.4" height="15.4" rx="1.5" fill="#140606"/><rect x="1" y="1" width="14" height="14" rx="1" fill="#480f0f"/><polygon points="3.5,10 3.5,14.5 14,14.5 14,10" fill="#582626"/><polygon points="1.5,2 3.5,2 6.5,4.5 5.5,7.5 3.5,9.5 1.5,10" fill="#ac8a8a"/><polygon points="13.5,3 13.5,10.5 9.5,9 10,6" fill="#6c3434"/><ellipse cx="8.3" cy="8.3" rx="3" ry="1.4" fill="#e09040"/></svg>
<svg style="position:absolute;left:1070.20px;top:97.00px" width="15.00" height="15.60" viewBox="0 0 16 16" preserveAspectRatio="none"><rect x="0.3" y="0.3" width="15.4" height="15.4" rx="1.5" fill="#140606"/><rect x="1" y="1" width="14" height="14" rx="1" fill="#480f0f"/><polygon points="3.5,10 3.5,14.5 14,14.5 14,10" fill="#582626"/><polygon points="1.5,2 3.5,2 6.5,4.5 5.5,7.5 3.5,9.5 1.5,10" fill="#ac8a8a"/><polygon points="13.5,3 13.5,10.5 9.5,9 10,6" fill="#6c3434"/><ellipse cx="8.3" cy="8.3" rx="3" ry="1.4" fill="#e09040"/></svg>
<svg style="position:absolute;left:1133.50px;top:97.00px" width="15.00" height="15.60" viewBox="0 0 16 16" preserveAspectRatio="none"><rect x="0.3" y="0.3" width="15.4" height="15.4" rx="1.5" fill="#140606"/><rect x="1" y="1" width="14" height="14" rx="1" fill="#480f0f"/><polygon points="3.5,10 3.5,14.5 14,14.5 14,10" fill="#582626"/><polygon points="1.5,2 3.5,2 6.5,4.5 5.5,7.5 3.5,9.5 1.5,10" fill="#ac8a8a"/><polygon points="13.5,3 13.5,10.5 9.5,9 10,6" fill="#6c3434"/><ellipse cx="8.3" cy="8.3" rx="3" ry="1.4" fill="#e09040"/></svg>
<svg style="position:absolute;left:122.80px;top:635.00px" width="16.00" height="16.80" viewBox="0 0 16 16" preserveAspectRatio="none"><rect x="0.3" y="0.3" width="15.4" height="15.4" rx="1.5" fill="#3a2a08"/><rect x="1" y="1" width="14" height="14" rx="1" fill="#e6a818"/><polygon points="3.5,10 3.5,14.5 14,14.5 14,10" fill="#f4c448"/><polygon points="1.5,2 3.5,2 6.5,4.5 5.5,7.5 3.5,9.5 1.5,10" fill="#fff4c0"/><polygon points="13.5,3 13.5,10.5 9.5,9 10,6" fill="#ffd878"/><ellipse cx="8.3" cy="8.3" rx="3" ry="1.4" fill="#fffa90"/></svg>
<svg style="position:absolute;left:122.80px;top:659.80px" width="16.00" height="17.00" viewBox="0 0 16 16" preserveAspectRatio="none"><rect x="0.3" y="0.3" width="15.4" height="15.4" rx="1.5" fill="#3a0a08"/><rect x="1" y="1" width="14" height="14" rx="1" fill="#dc2414"/><polygon points="3.5,10 3.5,14.5 14,14.5 14,10" fill="#ff6a58"/><polygon points="1.5,2 3.5,2 6.5,4.5 5.5,7.5 3.5,9.5 1.5,10" fill="#ffe8dc"/><polygon points="13.5,3 13.5,10.5 9.5,9 10,6" fill="#ff9a8a"/><ellipse cx="8.3" cy="8.3" rx="3" ry="1.4" fill="#ffe040"/></svg>
<svg style="position:absolute;left:145.10px;top:635.00px" width="16.00" height="16.80" viewBox="0 0 16 16" preserveAspectRatio="none"><rect x="0.3" y="0.3" width="15.4" height="15.4" rx="1.5" fill="#120e08"/><rect x="1" y="1" width="14" height="14" rx="1" fill="#3e3219"/><polygon points="3.5,10 3.5,14.5 14,14.5 14,10" fill="#514429"/><polygon points="1.5,2 3.5,2 6.5,4.5 5.5,7.5 3.5,9.5 1.5,10" fill="#a89c78"/><polygon points="13.5,3 13.5,10.5 9.5,9 10,6" fill="#675a3e"/><ellipse cx="8.3" cy="8.3" rx="3" ry="1.4" fill="#b8c040"/></svg>
<svg style="position:absolute;left:145.10px;top:659.80px" width="16.00" height="17.00" viewBox="0 0 16 16" preserveAspectRatio="none"><rect x="0.3" y="0.3" width="15.4" height="15.4" rx="1.5" fill="#140606"/><rect x="1" y="1" width="14" height="14" rx="1" fill="#480f0f"/><polygon points="3.5,10 3.5,14.5 14,14.5 14,10" fill="#582626"/><polygon points="1.5,2 3.5,2 6.5,4.5 5.5,7.5 3.5,9.5 1.5,10" fill="#ac8a8a"/><polygon points="13.5,3 13.5,10.5 9.5,9 10,6" fill="#6c3434"/><ellipse cx="8.3" cy="8.3" rx="3" ry="1.4" fill="#e09040"/></svg>
<svg style="position:absolute;left:167.40px;top:635.00px" width="16.00" height="16.80" viewBox="0 0 16 16" preserveAspectRatio="none"><rect x="0.3" y="0.3" width="15.4" height="15.4" rx="1.5" fill="#120e08"/><rect x="1" y="1" width="14" height="14" rx="1" fill="#3e3219"/><polygon points="3.5,10 3.5,14.5 14,14.5 14,10" fill="#514429"/><polygon points="1.5,2 3.5,2 6.5,4.5 5.5,7.5 3.5,9.5 1.5,10" fill="#a89c78"/><polygon points="13.5,3 13.5,10.5 9.5,9 10,6" fill="#675a3e"/><ellipse cx="8.3" cy="8.3" rx="3" ry="1.4" fill="#b8c040"/></svg>
<svg style="position:absolute;left:167.40px;top:659.80px" width="16.00" height="17.00" viewBox="0 0 16 16" preserveAspectRatio="none"><rect x="0.3" y="0.3" width="15.4" height="15.4" rx="1.5" fill="#140606"/><rect x="1" y="1" width="14" height="14" rx="1" fill="#480f0f"/><polygon points="3.5,10 3.5,14.5 14,14.5 14,10" fill="#582626"/><polygon points="1.5,2 3.5,2 6.5,4.5 5.5,7.5 3.5,9.5 1.5,10" fill="#ac8a8a"/><polygon points="13.5,3 13.5,10.5 9.5,9 10,6" fill="#6c3434"/><ellipse cx="8.3" cy="8.3" rx="3" ry="1.4" fill="#e09040"/></svg>
<svg style="position:absolute;left:189.70px;top:635.00px" width="16.00" height="16.80" viewBox="0 0 16 16" preserveAspectRatio="none"><rect x="0.3" y="0.3" width="15.4" height="15.4" rx="1.5" fill="#120e08"/><rect x="1" y="1" width="14" height="14" rx="1" fill="#3e3219"/><polygon points="3.5,10 3.5,14.5 14,14.5 14,10" fill="#514429"/><polygon points="1.5,2 3.5,2 6.5,4.5 5.5,7.5 3.5,9.5 1.5,10" fill="#a89c78"/><polygon points="13.5,3 13.5,10.5 9.5,9 10,6" fill="#675a3e"/><ellipse cx="8.3" cy="8.3" rx="3" ry="1.4" fill="#b8c040"/></svg>
<svg style="position:absolute;left:189.70px;top:659.80px" width="16.00" height="17.00" viewBox="0 0 16 16" preserveAspectRatio="none"><rect x="0.3" y="0.3" width="15.4" height="15.4" rx="1.5" fill="#140606"/><rect x="1" y="1" width="14" height="14" rx="1" fill="#480f0f"/><polygon points="3.5,10 3.5,14.5 14,14.5 14,10" fill="#582626"/><polygon points="1.5,2 3.5,2 6.5,4.5 5.5,7.5 3.5,9.5 1.5,10" fill="#ac8a8a"/><polygon points="13.5,3 13.5,10.5 9.5,9 10,6" fill="#6c3434"/><ellipse cx="8.3" cy="8.3" rx="3" ry="1.4" fill="#e09040"/></svg>
<svg style="position:absolute;left:212.00px;top:635.00px" width="16.00" height="16.80" viewBox="0 0 16 16" preserveAspectRatio="none"><rect x="0.3" y="0.3" width="15.4" height="15.4" rx="1.5" fill="#120e08"/><rect x="1" y="1" width="14" height="14" rx="1" fill="#3e3219"/><polygon points="3.5,10 3.5,14.5 14,14.5 14,10" fill="#514429"/><polygon points="1.5,2 3.5,2 6.5,4.5 5.5,7.5 3.5,9.5 1.5,10" fill="#a89c78"/><polygon points="13.5,3 13.5,10.5 9.5,9 10,6" fill="#675a3e"/><ellipse cx="8.3" cy="8.3" rx="3" ry="1.4" fill="#b8c040"/></svg>
<svg style="position:absolute;left:212.00px;top:659.80px" width="16.00" height="17.00" viewBox="0 0 16 16" preserveAspectRatio="none"><rect x="0.3" y="0.3" width="15.4" height="15.4" rx="1.5" fill="#140606"/><rect x="1" y="1" width="14" height="14" rx="1" fill="#480f0f"/><polygon points="3.5,10 3.5,14.5 14,14.5 14,10" fill="#582626"/><polygon points="1.5,2 3.5,2 6.5,4.5 5.5,7.5 3.5,9.5 1.5,10" fill="#ac8a8a"/><polygon points="13.5,3 13.5,10.5 9.5,9 10,6" fill="#6c3434"/><ellipse cx="8.3" cy="8.3" rx="3" ry="1.4" fill="#e09040"/></svg>
<svg style="position:absolute;left:234.30px;top:635.00px" width="16.00" height="16.80" viewBox="0 0 16 16" preserveAspectRatio="none"><rect x="0.3" y="0.3" width="15.4" height="15.4" rx="1.5" fill="#120e08"/><rect x="1" y="1" width="14" height="14" rx="1" fill="#3e3219"/><polygon points="3.5,10 3.5,14.5 14,14.5 14,10" fill="#514429"/><polygon points="1.5,2 3.5,2 6.5,4.5 5.5,7.5 3.5,9.5 1.5,10" fill="#a89c78"/><polygon points="13.5,3 13.5,10.5 9.5,9 10,6" fill="#675a3e"/><ellipse cx="8.3" cy="8.3" rx="3" ry="1.4" fill="#b8c040"/></svg>
<svg style="position:absolute;left:234.30px;top:659.80px" width="16.00" height="17.00" viewBox="0 0 16 16" preserveAspectRatio="none"><rect x="0.3" y="0.3" width="15.4" height="15.4" rx="1.5" fill="#140606"/><rect x="1" y="1" width="14" height="14" rx="1" fill="#480f0f"/><polygon points="3.5,10 3.5,14.5 14,14.5 14,10" fill="#582626"/><polygon points="1.5,2 3.5,2 6.5,4.5 5.5,7.5 3.5,9.5 1.5,10" fill="#ac8a8a"/><polygon points="13.5,3 13.5,10.5 9.5,9 10,6" fill="#6c3434"/><ellipse cx="8.3" cy="8.3" rx="3" ry="1.4" fill="#e09040"/></svg>
<svg style="position:absolute;left:256.60px;top:635.00px" width="16.00" height="16.80" viewBox="0 0 16 16" preserveAspectRatio="none"><rect x="0.3" y="0.3" width="15.4" height="15.4" rx="1.5" fill="#120e08"/><rect x="1" y="1" width="14" height="14" rx="1" fill="#3e3219"/><polygon points="3.5,10 3.5,14.5 14,14.5 14,10" fill="#514429"/><polygon points="1.5,2 3.5,2 6.5,4.5 5.5,7.5 3.5,9.5 1.5,10" fill="#a89c78"/><polygon points="13.5,3 13.5,10.5 9.5,9 10,6" fill="#675a3e"/><ellipse cx="8.3" cy="8.3" rx="3" ry="1.4" fill="#b8c040"/></svg>
<svg style="position:absolute;left:256.60px;top:659.80px" width="16.00" height="17.00" viewBox="0 0 16 16" preserveAspectRatio="none"><rect x="0.3" y="0.3" width="15.4" height="15.4" rx="1.5" fill="#140606"/><rect x="1" y="1" width="14" height="14" rx="1" fill="#480f0f"/><polygon points="3.5,10 3.5,14.5 14,14.5 14,10" fill="#582626"/><polygon points="1.5,2 3.5,2 6.5,4.5 5.5,7.5 3.5,9.5 1.5,10" fill="#ac8a8a"/><polygon points="13.5,3 13.5,10.5 9.5,9 10,6" fill="#6c3434"/><ellipse cx="8.3" cy="8.3" rx="3" ry="1.4" fill="#e09040"/></svg>
<svg style="position:absolute;left:278.90px;top:635.00px" width="16.00" height="16.80" viewBox="0 0 16 16" preserveAspectRatio="none"><rect x="0.3" y="0.3" width="15.4" height="15.4" rx="1.5" fill="#120e08"/><rect x="1" y="1" width="14" height="14" rx="1" fill="#3e3219"/><polygon points="3.5,10 3.5,14.5 14,14.5 14,10" fill="#514429"/><polygon points="1.5,2 3.5,2 6.5,4.5 5.5,7.5 3.5,9.5 1.5,10" fill="#a89c78"/><polygon points="13.5,3 13.5,10.5 9.5,9 10,6" fill="#675a3e"/><ellipse cx="8.3" cy="8.3" rx="3" ry="1.4" fill="#b8c040"/></svg>
<svg style="position:absolute;left:278.90px;top:659.80px" width="16.00" height="17.00" viewBox="0 0 16 16" preserveAspectRatio="none"><rect x="0.3" y="0.3" width="15.4" height="15.4" rx="1.5" fill="#140606"/><rect x="1" y="1" width="14" height="14" rx="1" fill="#480f0f"/><polygon points="3.5,10 3.5,14.5 14,14.5 14,10" fill="#582626"/><polygon points="1.5,2 3.5,2 6.5,4.5 5.5,7.5 3.5,9.5 1.5,10" fill="#ac8a8a"/><polygon points="13.5,3 13.5,10.5 9.5,9 10,6" fill="#6c3434"/><ellipse cx="8.3" cy="8.3" rx="3" ry="1.4" fill="#e09040"/></svg>
<div style="position:absolute;left:994px;top:65px;width:12px;height:13px;background:#e65020;box-shadow:0 0 0 1px #102020"></div>
<div style="position:absolute;left:1010px;top:65px;width:224px;height:6px;background:repeating-linear-gradient(90deg,#b9dcfc 0,#b9dcfc 3.5px,#5a7090 3.5px,#5a7090 4.5px)"></div>
<div style="position:absolute;left:1010px;top:72px;width:218px;height:6px;background:repeating-linear-gradient(90deg,#b9dcfc 0,#b9dcfc 3.5px,#5a7090 3.5px,#5a7090 4.5px)"></div>
<div style="position:absolute;left:1234px;top:65px;width:42px;height:6px;background:repeating-linear-gradient(90deg,#3a1a1a 0,#3a1a1a 3.5px,#241414 3.5px,#241414 4.5px)"></div>
<div style="position:absolute;left:1228px;top:72px;width:48px;height:6px;background:repeating-linear-gradient(90deg,#3a1a1a 0,#3a1a1a 3.5px,#241414 3.5px,#241414 4.5px)"></div>
<div class="tx" style="left:35.45px;top:655.90px;font-size:15.64px;color:#ffffff;font-weight:bold;transform-origin:0 0;transform:rotate(-90deg) scaleX(0.767) translate(-16.95px,-8.56px);-webkit-text-stroke:0.51px #ffffff">BAR</div>
<div class="tx" style="left:551.05px;top:656.95px;font-size:17.04px;color:#ffffff;font-weight:bold;transform-origin:0 0;transform:rotate(-90deg) scaleX(0.790) translate(-24.61px,-9.32px);-webkit-text-stroke:0.50px #ffffff">SHIFT</div>
<div class="tx" style="left:33.90px;top:52.12px;font-size:12.57px;color:#6a84a6;font-weight:bold;transform:scaleX(0.796);-webkit-text-stroke:0.36px #6a84a6;text-shadow:0.5px 0.5px 1px rgba(0,0,0,.75);">BACK</div>
<div class="tx" style="left:156.25px;top:52.63px;font-size:12.01px;color:#6a84a6;font-weight:bold;transform:scaleX(0.881);-webkit-text-stroke:0.20px #6a84a6;text-shadow:0.5px 0.5px 1px rgba(0,0,0,.75);">FX EDIT</div>
<div class="tx" style="left:249.00px;top:52.35px;font-size:12.43px;color:#6a84a6;font-weight:bold;transform:scaleX(0.861);-webkit-text-stroke:0.24px #6a84a6;text-shadow:0.5px 0.5px 1px rgba(0,0,0,.75);">FX SEND</div>
<div class="tx" style="left:351.10px;top:52.63px;font-size:12.01px;color:#6a84a6;font-weight:bold;transform:scaleX(0.917);-webkit-text-stroke:0.14px #6a84a6;text-shadow:0.5px 0.5px 1px rgba(0,0,0,.75);">MIXER</div>
<div class="tx" style="left:782.90px;top:52.35px;font-size:12.43px;color:#6a84a6;font-weight:bold;transform:scaleX(0.926);-webkit-text-stroke:0.13px #6a84a6;text-shadow:0.5px 0.5px 1px rgba(0,0,0,.75);">MAIN MENU</div>
<div class="tx" style="left:898.40px;top:52.35px;font-size:12.43px;color:#6a84a6;font-weight:bold;transform:scaleX(0.866);-webkit-text-stroke:0.23px #6a84a6;text-shadow:0.5px 0.5px 1px rgba(0,0,0,.75);">VIEW</div>
<div class="tx" style="left:1239.70px;top:38.52px;font-size:13.13px;color:#45e3a0;font-weight:bold;transform:scaleX(0.883);-webkit-text-stroke:0.22px #45e3a0;text-shadow:0.5px 0.5px 1px rgba(0,0,0,.75);">128.0</div>
<div style="position:absolute;left:175.8px;top:99.2px;width:2.2px;height:12px;background:#858585"></div>
<svg style="position:absolute;left:0;top:0" width="1280" height="800"><path d="M176,99.2 L178,99.2 L177.2,102 L173.4,103.4 L173.4,101.6 Z" fill="#858585"/></svg>
<div class="tx" style="left:41.00px;top:130.31px;font-size:16.90px;color:#8a8a8c;font-weight:bold;transform:scaleX(0.843);-webkit-text-stroke:0.37px #8a8a8c;text-shadow:0.5px 0.5px 1px rgba(0,0,0,.75);">GRID</div>
<div class="tx" style="left:43.80px;top:149.58px;font-size:17.04px;color:#8a8a8c;font-weight:bold;transform:scaleX(0.834);-webkit-text-stroke:0.40px #8a8a8c;text-shadow:0.5px 0.5px 1px rgba(0,0,0,.75);">CFG</div>
<div class="tx" style="left:53.75px;top:263.15px;font-size:25.14px;color:#0e3b2b;font-weight:normal;transform:scaleX(0.833);-webkit-text-stroke:0.38px #0e3b2b;-webkit-text-stroke:1px #0e3b2b">0</div>
<div class="tx" style="left:40.25px;top:371.18px;font-size:14.94px;color:#ffffff;font-weight:bold;transform:scaleX(0.886);-webkit-text-stroke:0.24px #ffffff;text-shadow:0.5px 0.5px 1px rgba(0,0,0,.75);">SHIFT</div>
<div class="tx" style="left:53.10px;top:480.36px;font-size:24.02px;color:#0e3b2b;font-weight:normal;transform:scaleX(0.966);-webkit-text-stroke:0.07px #0e3b2b;-webkit-text-stroke:1px #0e3b2b">4</div>
<div class="tx" style="left:33.60px;top:588.42px;font-size:15.22px;color:#ffffff;font-weight:bold;transform:scaleX(0.845);-webkit-text-stroke:0.33px #ffffff;text-shadow:0.5px 0.5px 1px rgba(0,0,0,.75);">OCTAVE</div>
<div class="tx" style="left:1202.00px;top:141.59px;font-size:15.92px;color:#c5e4fb;font-weight:bold;transform:scaleX(0.965);-webkit-text-stroke:0.08px #c5e4fb;text-shadow:0.5px 0.5px 1px rgba(0,0,0,.75);">EDIT</div>
<div class="tx" style="left:1200.60px;top:182.60px;font-size:14.80px;color:#ffffff;font-weight:bold;transform:scaleX(0.865);-webkit-text-stroke:0.28px #ffffff;text-shadow:0.5px 0.5px 1px rgba(0,0,0,.75);">MODE</div>
<div class="tx" style="left:1204.60px;top:226.10px;font-size:15.36px;color:#727273;font-weight:bold;transform:scaleX(0.931);-webkit-text-stroke:0.15px #727273;text-shadow:0.5px 0.5px 1px rgba(0,0,0,.75);">KEY</div>
<div class="tx" style="left:1205.60px;top:245.75px;font-size:15.08px;color:#727273;font-weight:bold;transform:scaleX(0.954);-webkit-text-stroke:0.10px #727273;text-shadow:0.5px 0.5px 1px rgba(0,0,0,.75);">VEL</div>
<div class="tx" style="left:1195.30px;top:402.83px;font-size:14.66px;color:#ffffff;font-weight:bold;transform:scaleX(0.920);-webkit-text-stroke:0.16px #ffffff;text-shadow:0.5px 0.5px 1px rgba(0,0,0,.75);">PARAM</div>
<div class="tx" style="left:1205.00px;top:455.89px;font-size:16.48px;color:#6c6c6d;font-weight:bold;transform:scaleX(0.892);-webkit-text-stroke:0.25px #6c6c6d;text-shadow:0.5px 0.5px 1px rgba(0,0,0,.75);">DEL</div>
<div class="tx" style="left:1201.90px;top:497.83px;font-size:14.11px;color:#ffffff;font-weight:bold;transform:scaleX(0.916);-webkit-text-stroke:0.16px #ffffff;text-shadow:0.5px 0.5px 1px rgba(0,0,0,.75);">FUNC</div>
<div class="tx" style="left:420.70px;top:645.08px;font-size:23.39px;color:#8a8a8c;font-weight:bold;transform:scaleX(0.837);-webkit-text-stroke:0.53px #8a8a8c;text-shadow:0.5px 0.5px 1px rgba(0,0,0,.75);">LOOP</div>
<div class="tx" style="left:671.00px;top:642.26px;font-size:26.68px;color:#0e3b2b;font-weight:normal;transform:scaleX(0.876);-webkit-text-stroke:0.30px #0e3b2b;-webkit-text-stroke:1px #0e3b2b">0</div>
<div class="tx" style="left:823.75px;top:645.71px;font-size:22.70px;color:#4a4a4b;font-weight:bold;transform:scaleX(0.906);-webkit-text-stroke:0.30px #4a4a4b;text-shadow:0.5px 0.5px 1px rgba(0,0,0,.75);">RANDOM</div>
<div class="tx" style="left:977.50px;top:645.71px;font-size:22.70px;color:#4a4a4b;font-weight:bold;transform:scaleX(0.871);-webkit-text-stroke:0.41px #4a4a4b;text-shadow:0.5px 0.5px 1px rgba(0,0,0,.75);">REVERSE</div>
<div class="tx" style="left:1141.50px;top:644.69px;font-size:23.88px;color:#8a8a8c;font-weight:bold;transform:scaleX(0.868);-webkit-text-stroke:0.44px #8a8a8c;text-shadow:0.5px 0.5px 1px rgba(0,0,0,.75);">INVERT</div>
<div class="tx" style="left:18.60px;top:731.80px;font-size:24.86px;color:#cdeaff;font-weight:bold;transform:scaleX(0.882);-webkit-text-stroke:0.41px #cdeaff;text-shadow:0.5px 0.5px 1px rgba(0,0,0,.75);">VT01</div>
<div class="tx" style="left:112.00px;top:731.80px;font-size:24.86px;color:#8a8a8c;font-weight:bold;transform:scaleX(0.909);-webkit-text-stroke:0.32px #8a8a8c;text-shadow:0.5px 0.5px 1px rgba(0,0,0,.75);">VT02</div>
<div class="tx" style="left:205.27px;top:731.80px;font-size:24.86px;color:#8a8a8c;font-weight:bold;transform:scaleX(0.909);-webkit-text-stroke:0.32px #8a8a8c;text-shadow:0.5px 0.5px 1px rgba(0,0,0,.75);">VT03</div>
<div class="tx" style="left:298.54px;top:731.80px;font-size:24.86px;color:#8a8a8c;font-weight:bold;transform:scaleX(0.909);-webkit-text-stroke:0.32px #8a8a8c;text-shadow:0.5px 0.5px 1px rgba(0,0,0,.75);">VT04</div>
<div class="tx" style="left:391.81px;top:731.80px;font-size:24.86px;color:#8a8a8c;font-weight:bold;transform:scaleX(0.909);-webkit-text-stroke:0.32px #8a8a8c;text-shadow:0.5px 0.5px 1px rgba(0,0,0,.75);">VT05</div>
<div class="tx" style="left:485.08px;top:731.80px;font-size:24.86px;color:#444445;font-weight:bold;transform:scaleX(0.909);-webkit-text-stroke:0.32px #444445;text-shadow:0.5px 0.5px 1px rgba(0,0,0,.75);">VT06</div>
<div class="tx" style="left:578.35px;top:731.80px;font-size:24.86px;color:#444445;font-weight:bold;transform:scaleX(0.909);-webkit-text-stroke:0.32px #444445;text-shadow:0.5px 0.5px 1px rgba(0,0,0,.75);">VT07</div>
<div class="tx" style="left:671.62px;top:731.80px;font-size:24.86px;color:#444445;font-weight:bold;transform:scaleX(0.909);-webkit-text-stroke:0.32px #444445;text-shadow:0.5px 0.5px 1px rgba(0,0,0,.75);">VT08</div>
<div class="tx" style="left:764.89px;top:731.80px;font-size:24.86px;color:#444445;font-weight:bold;transform:scaleX(0.909);-webkit-text-stroke:0.32px #444445;text-shadow:0.5px 0.5px 1px rgba(0,0,0,.75);">VT09</div>
<div class="tx" style="left:858.16px;top:731.80px;font-size:24.86px;color:#444445;font-weight:bold;transform:scaleX(0.909);-webkit-text-stroke:0.32px #444445;text-shadow:0.5px 0.5px 1px rgba(0,0,0,.75);">VT10</div>
<div class="tx" style="left:951.43px;top:731.80px;font-size:24.86px;color:#444445;font-weight:bold;transform:scaleX(0.930);-webkit-text-stroke:0.24px #444445;text-shadow:0.5px 0.5px 1px rgba(0,0,0,.75);">VT11</div>
<div class="tx" style="left:1044.70px;top:731.80px;font-size:24.86px;color:#444445;font-weight:bold;transform:scaleX(0.909);-webkit-text-stroke:0.32px #444445;text-shadow:0.5px 0.5px 1px rgba(0,0,0,.75);">VT12</div>
<div class="tx" style="left:1144.00px;top:733.00px;font-size:22.21px;color:#c5e8ff;font-weight:bold;transform:scaleX(0.981);-webkit-text-stroke:0.06px #c5e8ff;text-shadow:0.5px 0.5px 1px rgba(0,0,0,.75);">SEL/MENU</div>
<div class="tx" style="left:1181.20px;top:778.41px;font-size:13.69px;color:#ffffff;font-weight:bold;transform:scaleX(0.906);-webkit-text-stroke:0.18px #ffffff;text-shadow:0.5px 0.5px 1px rgba(0,0,0,.75);">MODE</div>
<div class="tx" style="left:11.60px;top:778.28px;font-size:17.04px;color:#111;font-weight:normal;transform:scaleX(0.865);-webkit-text-stroke:0.21px #111;-webkit-text-stroke:0.35px #111">Gran..) PH</div>
<div class="tx" style="left:202.00px;top:778.34px;font-size:16.20px;color:#111;font-weight:normal;transform:scaleX(0.936);-webkit-text-stroke:0.09px #111;-webkit-text-stroke:0.35px #111">Vibes PH</div>
<div class="tx" style="left:295.00px;top:778.34px;font-size:16.20px;color:#111;font-weight:normal;transform:scaleX(0.934);-webkit-text-stroke:0.10px #111;-webkit-text-stroke:0.35px #111">Vibes PH</div>
<div class="tx" style="left:385.80px;top:778.34px;font-size:16.20px;color:#111;font-weight:normal;transform:scaleX(0.952);-webkit-text-stroke:0.07px #111;-webkit-text-stroke:0.35px #111">Vibe..shot</div>
<div style="position:absolute;left:136.5px;top:787.7px;width:4.5px;height:1.6px;background:#1a1a1a"></div>
<div style="position:absolute;left:509.5px;top:787.7px;width:4.5px;height:1.6px;background:#1a1a1a"></div>
<div style="position:absolute;left:602.5px;top:787.7px;width:4.5px;height:1.6px;background:#1a1a1a"></div>
<div style="position:absolute;left:696.0px;top:787.7px;width:4.5px;height:1.6px;background:#1a1a1a"></div>
<div style="position:absolute;left:789.0px;top:787.7px;width:4.5px;height:1.6px;background:#1a1a1a"></div>
<div style="position:absolute;left:882.5px;top:787.7px;width:4.5px;height:1.6px;background:#1a1a1a"></div>
<div style="position:absolute;left:975.5px;top:787.7px;width:4.5px;height:1.6px;background:#1a1a1a"></div>
<div style="position:absolute;left:1069.0px;top:787.7px;width:4.5px;height:1.6px;background:#1a1a1a"></div>
<div class="tx" style="left:140.02px;top:125.62px;font-size:16.55px;color:#111;font-weight:bold;transform:scaleX(0.864);-webkit-text-stroke:0.32px #111;">E5</div>
<div class="tx" style="left:139.23px;top:183.14px;font-size:16.55px;color:#111;font-weight:bold;transform:scaleX(0.864);-webkit-text-stroke:0.32px #111;">D5</div>
<div class="tx" style="left:139.23px;top:240.66px;font-size:16.55px;color:#111;font-weight:bold;transform:scaleX(0.864);-webkit-text-stroke:0.32px #111;">C5</div>
<div class="tx" style="left:139.23px;top:269.42px;font-size:16.55px;color:#111;font-weight:bold;transform:scaleX(0.864);-webkit-text-stroke:0.32px #111;">B4</div>
<div class="tx" style="left:139.23px;top:326.94px;font-size:16.55px;color:#111;font-weight:bold;transform:scaleX(0.864);-webkit-text-stroke:0.32px #111;">A4</div>
<div class="tx" style="left:138.43px;top:384.46px;font-size:16.55px;color:#111;font-weight:bold;transform:scaleX(0.864);-webkit-text-stroke:0.32px #111;">G4</div>
<div class="tx" style="left:140.82px;top:441.98px;font-size:16.55px;color:#111;font-weight:bold;transform:scaleX(0.864);-webkit-text-stroke:0.32px #111;">F4</div>
<div class="tx" style="left:140.02px;top:470.74px;font-size:16.55px;color:#111;font-weight:bold;transform:scaleX(0.864);-webkit-text-stroke:0.32px #111;">E4</div>
<div class="tx" style="left:139.23px;top:528.26px;font-size:16.55px;color:#111;font-weight:bold;transform:scaleX(0.864);-webkit-text-stroke:0.32px #111;">D4</div>
<div class="tx" style="left:139.23px;top:585.78px;font-size:16.55px;color:#111;font-weight:bold;transform:scaleX(0.864);-webkit-text-stroke:0.32px #111;">C4</div>
<div class="tx" style="left:175.80px;top:180.24px;font-size:21.30px;color:#ffffff;font-weight:bold;transform:scaleX(0.929);-webkit-text-stroke:0.21px #ffffff;text-shadow:0.5px 0.5px 1px rgba(0,0,0,.75);">75</div>
<div class="tx" style="left:202.80px;top:183.48px;font-size:17.17px;color:#ffffff;font-weight:bold;transform:scaleX(0.958);-webkit-text-stroke:0.10px #ffffff;text-shadow:0.5px 0.5px 1px rgba(0,0,0,.75);-webkit-text-stroke:1.2px #fff"><<</div>
<div class="tx" style="left:813.40px;top:179.98px;font-size:21.37px;color:#ffffff;font-weight:bold;transform:scaleX(0.938);-webkit-text-stroke:0.18px #ffffff;text-shadow:0.5px 0.5px 1px rgba(0,0,0,.75);">75</div>
<div class="tx" style="left:999.90px;top:294.67px;font-size:21.65px;color:#ffffff;font-weight:bold;transform:scaleX(0.900);-webkit-text-stroke:0.30px #ffffff;text-shadow:0.5px 0.5px 1px rgba(0,0,0,.75);">120</div>
<div class="tx" style="left:1126.50px;top:294.67px;font-size:21.65px;color:#ffffff;font-weight:bold;transform:scaleX(0.931);-webkit-text-stroke:0.21px #ffffff;text-shadow:0.5px 0.5px 1px rgba(0,0,0,.75);">110</div>
<div class="tx" style="left:372.40px;top:323.43px;font-size:21.65px;color:#ffffff;font-weight:bold;transform:scaleX(0.931);-webkit-text-stroke:0.21px #ffffff;text-shadow:0.5px 0.5px 1px rgba(0,0,0,.75);">118</div>
<div class="tx" style="left:810.90px;top:323.43px;font-size:21.65px;color:#ffffff;font-weight:bold;transform:scaleX(0.931);-webkit-text-stroke:0.21px #ffffff;text-shadow:0.5px 0.5px 1px rgba(0,0,0,.75);">110</div>
<div class="tx" style="left:1063.20px;top:323.43px;font-size:21.65px;color:#ffffff;font-weight:bold;transform:scaleX(0.931);-webkit-text-stroke:0.21px #ffffff;text-shadow:0.5px 0.5px 1px rgba(0,0,0,.75);">110</div>
<div class="tx" style="left:372.40px;top:438.47px;font-size:21.65px;color:#ffffff;font-weight:bold;transform:scaleX(0.931);-webkit-text-stroke:0.21px #ffffff;text-shadow:0.5px 0.5px 1px rgba(0,0,0,.75);">118</div>
<div class="tx" style="left:183.40px;top:467.23px;font-size:21.65px;color:#ffffff;font-weight:bold;transform:scaleX(0.900);-webkit-text-stroke:0.30px #ffffff;text-shadow:0.5px 0.5px 1px rgba(0,0,0,.75);">127</div>
<div class="tx" style="left:1063.20px;top:495.99px;font-size:21.65px;color:#ffffff;font-weight:bold;transform:scaleX(0.931);-webkit-text-stroke:0.21px #ffffff;text-shadow:0.5px 0.5px 1px rgba(0,0,0,.75);">115</div>
<div class="tx" style="left:372.40px;top:524.75px;font-size:21.65px;color:#ffffff;font-weight:bold;transform:scaleX(0.931);-webkit-text-stroke:0.21px #ffffff;text-shadow:0.5px 0.5px 1px rgba(0,0,0,.75);">118</div>
<div class="tx" style="left:183.40px;top:582.27px;font-size:21.65px;color:#ffffff;font-weight:bold;transform:scaleX(0.900);-webkit-text-stroke:0.30px #ffffff;text-shadow:0.5px 0.5px 1px rgba(0,0,0,.75);">127</div></body></html>
